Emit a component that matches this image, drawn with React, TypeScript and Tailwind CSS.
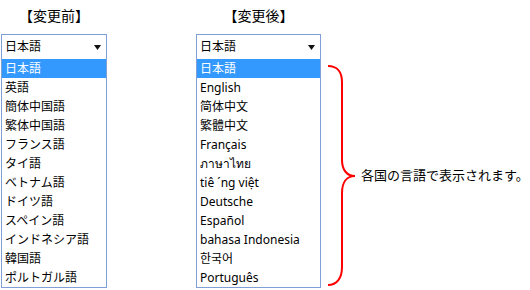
import React from "react";

const before = ["日本語", "英語", "簡体中国語", "繁体中国語", "フランス語", "タイ語", "ベトナム語", "ドイツ語", "スペイン語", "インドネシア語", "韓国語", "ポルトガル語"];
const after = ["日本語", "English", "简体中文", "繁體中文", "Français", "ภาษาไทย", "tiê ´ng việt", "Deutsche", "Español", "bahasa Indonesia", "한국어", "Português"];

const font = { fontFamily: '"Noto Sans", "Noto Sans CJK JP", sans-serif' };

function Arrow() {
  return (
    <svg width="7" height="5" viewBox="0 0 7 5">
      <path d="M0 0 L7 0 L3.5 5 Z" fill="#111" />
    </svg>
  );
}

function Column({ title, items, width }: { title: string; items: string[]; width: string }) {
  return (
    <div className={`flex flex-col ${width}`}>
      <div className="h-[34px] pb-[4px] flex items-center justify-center text-[14px] text-black">{title}</div>
      <div className="border border-[#7f9fd6] flex flex-col">
        <div className="h-[24px] flex items-center justify-between pl-[3px] pr-[5px] text-[12px] text-black">
          <span>日本語</span>
          <Arrow />
        </div>
        {items.map((it, i) => (
          <div
            key={i}
            className={`h-[19px] flex items-center pl-[3px] text-[12px] whitespace-nowrap ${i === 0 ? "bg-[#3399ff] text-white" : "text-black"}`}
          >
            {it}
          </div>
        ))}
      </div>
    </div>
  );
}

export default function App() {
  return (
    <div className="w-[530px] h-[290px] bg-white flex pl-[1px]" style={font}>
      <Column title="【変更前】" items={before} width="w-[106px]" />
      <div className="ml-[89px]">
        <Column title="【変更後】" items={after} width="w-[125px]" />
      </div>
      <div className="ml-[6px] pt-[64px] flex items-center self-start">
        <svg width="30" height="224" viewBox="0 0 30 224">
          <path
            d="M1 2 C10 2, 15 8, 15 18 L15 96 C15 106, 20 112, 28 112 C20 112, 15 118, 15 129 L15 203 C15 214, 10 221, 1 221"
            fill="none"
            stroke="#ff0000"
            strokeWidth="2"
          />
        </svg>
        <span className="ml-[4px] text-[13px] text-black whitespace-nowrap">各国の言語で表示されます。</span>
      </div>
    </div>
  );
}
